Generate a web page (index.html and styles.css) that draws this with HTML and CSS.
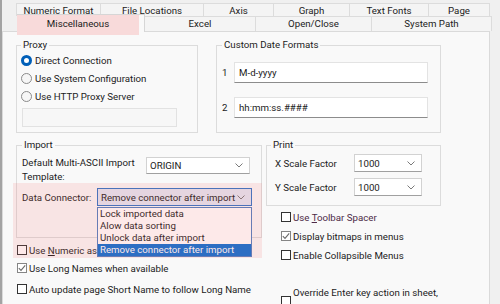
FILE: index.html
```html
<!DOCTYPE html>
<html lang="en">
<head>
  <meta charset="UTF-8">
  <title>Options - Miscellaneous</title>
  <link rel="stylesheet" href="styles.css">
</head>
<body>

  <!-- Tab strip, two rows -->
  <div class="tabs">
    <div class="tab-row back">
      <div class="tab tab-numeric">Numeric Format</div>
      <div class="tab tab-files">File Locations</div>
      <div class="tab tab-axis">Axis</div>
      <div class="tab tab-graph">Graph</div>
      <div class="tab tab-fonts">Text Fonts</div>
      <div class="tab tab-page">Page</div>
    </div>
    <div class="tab-row front">
      <div class="tab tab-misc active"><span class="tab-mark"></span><span class="tab-label">Miscellaneous</span></div>
      <div class="tab tab-excel">Excel</div>
      <div class="tab tab-open">Open/Close</div>
      <div class="tab tab-path">System Path</div>
    </div>
  </div>

  <!-- Tab page -->
  <div class="panel">
    <div class="row-top">
      <fieldset class="group proxy">
        <legend>Proxy</legend>
        <div class="radio-row"><span class="radio checked"></span>Direct Connection</div>
        <div class="radio-row"><span class="radio"></span>Use System Configuration</div>
        <div class="radio-row"><span class="radio"></span>Use HTTP Proxy Server</div>
        <div class="textbox disabled"></div>
      </fieldset>

      <fieldset class="group dates">
        <legend>Custom Date Formats</legend>
        <div class="date-row"><span class="date-num">1</span><div class="textbox">M-d-yyyy</div></div>
        <div class="date-row"><span class="date-num">2</span><div class="textbox">hh:mm:ss.####</div></div>
      </fieldset>
    </div>

    <div class="row-bottom">
      <div class="col-left">
        <fieldset class="group import">
          <legend>Import</legend>
          <div class="import-row">
            <div class="import-label">Default Multi-ASCII Import<br>Template:</div>
            <div class="combo combo-template">
              <span>ORIGIN</span>
              <svg class="chevron" width="8" height="5" viewBox="0 0 8 5"><path d="M0.5 0.5 L4 4 L7.5 0.5" fill="none" stroke="#7a7a7a" stroke-width="1"/></svg>
            </div>
          </div>
          <div class="import-row connector-row">
            <div class="connector-label">Data Connector:</div>
            <div class="combo-wrap">
              <div class="combo combo-connector">
                <span>Remove connector after import</span>
                <svg class="chevron" width="8" height="5" viewBox="0 0 8 5"><path d="M0.5 0.5 L4 4 L7.5 0.5" fill="none" stroke="#7a7a7a" stroke-width="1"/></svg>
              </div>
              <!-- open drop-down list -->
              <div class="dropdown">
                <div class="option">Lock imported data</div>
                <div class="option">Alow data sorting</div>
                <div class="option">Unlock data after import</div>
                <div class="option selected">Remove connector after import</div>
              </div>
            </div>
          </div>
        </fieldset>

        <div class="check-row first"><span class="checkbox"></span><span>Use <u>N</u>umeric as</span></div>
        <div class="check-row"><span class="checkbox checked"><svg width="8" height="8" viewBox="0 0 8 8"><path d="M0.8 4.2 L3 6.4 L7.2 1.4" fill="none" stroke="#6b6b6b" stroke-width="1.1"/></svg></span><span>Use Long Names when available</span></div>
        <div class="check-row last"><span class="checkbox"></span><span>Auto update page Short Name to follow Long Name</span></div>

        <!-- pink annotation over the connector area -->
        <div class="highlight"></div>
      </div>

      <div class="col-right">
        <fieldset class="group print">
          <legend>Print</legend>
          <div class="print-row">
            <span class="print-label">X Scale Factor</span>
            <div class="combo combo-scale">
              <span>1000</span>
              <svg class="chevron" width="8" height="5" viewBox="0 0 8 5"><path d="M0.5 0.5 L4 4 L7.5 0.5" fill="none" stroke="#7a7a7a" stroke-width="1"/></svg>
            </div>
          </div>
          <div class="print-row second">
            <span class="print-label">Y Scale Factor</span>
            <div class="combo combo-scale">
              <span>1000</span>
              <svg class="chevron" width="8" height="5" viewBox="0 0 8 5"><path d="M0.5 0.5 L4 4 L7.5 0.5" fill="none" stroke="#7a7a7a" stroke-width="1"/></svg>
            </div>
          </div>
        </fieldset>

        <div class="check-row right first"><span class="checkbox"></span><span class="spacer-text">Use <u>T</u>oolbar Spacer</span></div>
        <div class="check-row right"><span class="checkbox checked"><svg width="8" height="8" viewBox="0 0 8 8"><path d="M0.8 4.2 L3 6.4 L7.2 1.4" fill="none" stroke="#6b6b6b" stroke-width="1.1"/></svg></span><span>Display bitmaps in menus</span></div>
        <div class="check-row right"><span class="checkbox"></span><span>Enable Collapsible Menus</span></div>
        <div class="check-row right multi"><span class="checkbox"></span><span>Override Enter key action in sheet,</span></div>
      </div>
    </div>
  </div>

</body>
</html>
```
FILE: styles.css
```css
* {
  margin: 0;
  padding: 0;
  box-sizing: border-box;
}
body {
  width: 500px;
  height: 304px;
  overflow: hidden;
  background-color: #f0f0f0;
  border-left: 2px solid #a3a3a3;
  font-family: Roboto, "Liberation Sans", sans-serif;
  font-size: 9.7px;
  color: #1b1b1b;
}

/* Tabs */
.tabs {
  padding-top: 3px;
}
.tab-row {
  display: flex;
}
.tab-row.back {
  padding-left: 14px;
  height: 13px;
}
.tab-row.front {
  padding-left: 15px;
  height: 15px;
}
.tab {
  text-align: center;
  background-color: #f4f4f4;
  border: 1px solid #dcdcdc;
  border-bottom: none;
  margin-right: -1px;
}
.back .tab {
  height: 13px;
  line-height: 13px;
}
.front .tab {
  height: 15px;
  line-height: 14px;
}
.tab-numeric { width: 85px; }
.tab-files { width: 104px; }
.tab-axis { width: 71px; }
.tab-graph { width: 77px; }
.tab-fonts { width: 80px; }
.tab-page { width: 62px; }
.tab-excel { width: 112px; }
.tab-open { width: 117px; }
.tab-path { width: 121px; }
.tab.active {
  position: relative;
  z-index: 2;
  width: 128px;
  margin-top: -2px;
  height: 18px;
  line-height: 16px;
  padding-top: 1px;
  background-color: #f9f9f9;
  border-color: #d6d6d6;
}
.tab-mark {
  position: absolute;
  left: -1px;
  top: 0;
  width: 122px;
  height: 20px;
  background-color: #f8dada;
}
.tab-label {
  position: relative;
  margin-left: -6px;
}

/* Tab page */
.panel {
  position: relative;
  width: 488px;
  height: 273px;
  overflow: hidden;
  background-color: #f9f9f9;
  border: 1px solid #dadada;
  border-bottom: none;
  padding: 6px 0 0 13px;
}
.group {
  border: 1px solid #dcdcdc;
  border-radius: 0;
  padding: 0 4px;
}
.group legend {
  padding: 0 2px;
  line-height: 14px;
}
.row-top {
  display: flex;
  gap: 18px;
}
.proxy {
  width: 182px;
  height: 95px;
}
.dates {
  width: 225px;
  height: 95px;
  padding-left: 5px;
}

.radio-row {
  display: flex;
  align-items: center;
  height: 18px;
}
.radio-row:first-of-type {
  margin-top: -1px;
}
.radio {
  width: 11px;
  height: 11px;
  border-radius: 50%;
  border: 1px solid #8a8a8a;
  background-color: #f6f6f6;
  margin-right: 3px;
}
.radio.checked {
  border: 3.5px solid #005fb8;
  background-color: #ffffff;
}
.textbox {
  height: 21px;
  line-height: 19px;
  padding-left: 4px;
  background-color: #ffffff;
  border: 1px solid #e3e3e3;
  border-bottom-color: #8c8c8c;
}
.textbox.disabled {
  width: 155px;
  height: 19px;
  margin: 3px 0 0 1px;
  background-color: #f7f7f7;
  border-color: #e2e2e2;
}

.date-row {
  display: flex;
  align-items: center;
  margin-top: 10px;
}
.date-row + .date-row {
  margin-top: 14px;
}
.date-num {
  width: 12px;
}
.date-row .textbox {
  width: 194px;
}

/* Bottom half */
.row-bottom {
  display: flex;
  gap: 4px;
  margin-top: 5px;
}
.col-left {
  position: relative;
  width: 246px;
}
.import {
  width: 246px;
  height: 100px;
  padding-left: 5px;
}
.import-row {
  display: flex;
  align-items: flex-start;
  margin-top: 4px;
}
.import-label {
  width: 124px;
  line-height: 14px;
  white-space: nowrap;
}
.combo {
  display: flex;
  align-items: center;
  justify-content: space-between;
  padding: 0 6px 0 3px;
  background-color: #ffffff;
  border: 1px solid #d2d2d2;
  border-bottom-color: #a0a0a0;
}
.combo-template {
  width: 104px;
  height: 17px;
  margin-top: 1px;
}
.connector-row {
  align-items: center;
}
.connector-label {
  width: 75px;
}
.combo-wrap {
  position: relative;
}
.combo-connector {
  width: 155px;
  height: 18px;
  background-color: #e3e8f5;
  border: 1px solid #2f74c8;
}
.dropdown {
  position: absolute;
  z-index: 3;
  top: 19px;
  left: 0;
  width: 155px;
  height: 50px;
  background-color: #ffffff;
  border: 1px solid #4f7fc2;
}
.option {
  height: 12px;
  line-height: 12px;
  padding-left: 2px;
  white-space: nowrap;
}
.option.selected {
  background-color: #0b6fd3;
  color: #ffffff;
}
.highlight {
  position: absolute;
  z-index: 4;
  left: -3px;
  top: 45px;
  width: 249px;
  height: 75px;
  background-color: rgba(244, 110, 110, 0.15);
  pointer-events: none;
}

.check-row {
  display: flex;
  align-items: center;
  height: 18px;
  white-space: nowrap;
}
.col-left .check-row {
  padding-left: 1px;
}
.col-left .check-row.first {
  margin-top: 3px;
}
.col-left .check-row.last {
  margin-top: 3px;
}
.checkbox {
  display: flex;
  align-items: center;
  justify-content: center;
  flex-shrink: 0;
  width: 10px;
  height: 10px;
  margin-right: 2px;
  border: 1px solid #333333;
  background-color: #ffffff;
}
.checkbox.checked {
  border-color: #858585;
}

.col-right {
  width: 175px;
}
.print {
  width: 175px;
  height: 68px;
}
.print-row {
  display: flex;
  align-items: center;
  padding-left: 4px;
  margin-top: 2px;
}
.print-row.second {
  margin-top: 6px;
}
.print-label {
  width: 79px;
}
.combo-scale {
  width: 68px;
  height: 18px;
}
.col-right .check-row {
  padding-left: 15px;
}
.col-right .check-row.first {
  margin-top: 2px;
}
.col-right .check-row + .check-row {
  margin-top: 1px;
}
.col-right .check-row.multi {
  margin-top: 22px;
  align-items: flex-start;
  height: 14px;
  line-height: 14px;
}
.col-right .check-row.multi .checkbox {
  margin-top: 10px;
}
.spacer-text {
  color: #4d2a47;
}
```
